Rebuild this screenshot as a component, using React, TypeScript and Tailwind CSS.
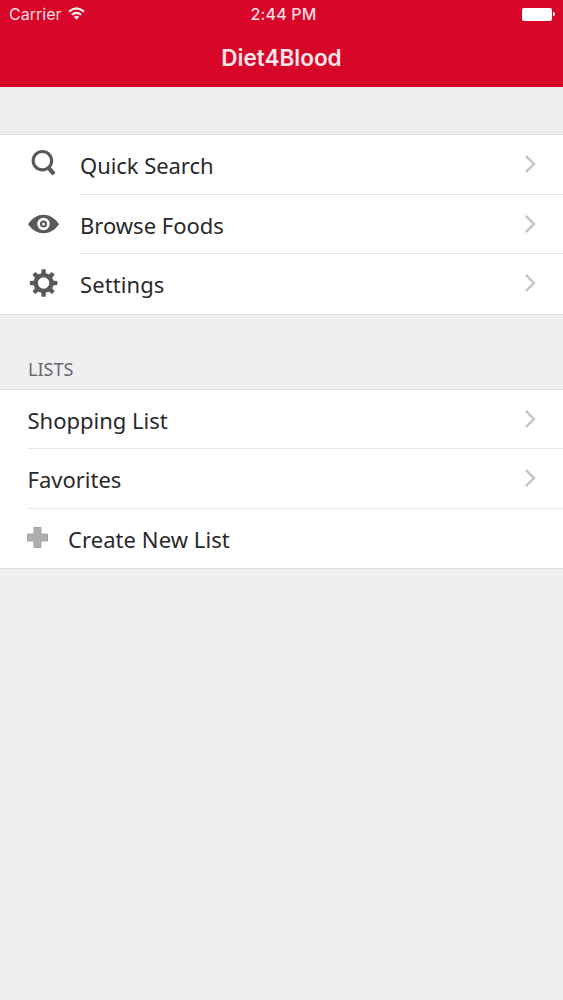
import React from 'react';

interface ListRowProps {
  label: string;
  icon?: React.ReactNode;
  labelClass?: string;
  divider?: boolean;
  chevron?: boolean;
}

const SearchIcon = () => (
  <svg className="w-8 h-8 block" viewBox="0 0 32 32" fill="none" stroke="#59595b">
    <circle cx="14.4" cy="13.7" r="9.2" strokeWidth="3.1" />
    <path d="M19.8 19.8L26 27.2" strokeWidth="4.2" />
  </svg>
);

const EyeIcon = () => (
  <svg className="w-8 h-8 block" viewBox="0 0 32 32">
    <path
      fill="#59595b"
      d="M0 16.2C4.2 10 9.7 6.8 15.5 6.8S26.8 10 31 16.2C26.8 22.2 21.3 25.2 15.5 25.2S4.2 22.2 0 16.2Z"
    />
    <circle cx="15.5" cy="16" r="6.2" fill="#fff" />
    <circle cx="15.5" cy="16" r="3.6" fill="#59595b" />
    <circle cx="15.5" cy="16" r="1.5" fill="#fff" />
  </svg>
);

const TOOTH_ANGLES = [0, 45, 90, 135, 180, 225, 270, 315];

const GearIcon = () => (
  <svg className="w-8 h-8 block" viewBox="0 0 32 32">
    <circle cx="15.6" cy="16" r="7.9" fill="none" stroke="#59595b" strokeWidth="4.4" />
    {TOOTH_ANGLES.map((angle) => (
      <path
        key={angle}
        d="M13.2 7.2L13.6 2.3H17.6L18 7.2Z"
        fill="#59595b"
        transform={`rotate(${angle} 15.6 16)`}
      />
    ))}
  </svg>
);

const PlusIcon = () => (
  <svg className="w-[21px] h-[21px] block" viewBox="0 0 21 21">
    <path d="M7 .5h7v6.5h6.5v7H14v6.5H7V14H.5V7H7Z" fill="#afafaf" stroke="#a3a3a3" />
  </svg>
);

const Chevron = () => (
  <svg className="w-3 h-5 mr-[27px]" viewBox="0 0 12 20" fill="none" stroke="#c8c8ca" strokeWidth="2.6">
    <path d="M1.8 1.8L10 10L1.8 18.2" />
  </svg>
);

const ListRow: React.FC<ListRowProps> = ({
  label,
  icon,
  labelClass = '',
  divider = true,
  chevron = true,
}) => (
  <div className="flex h-[59.5px] pl-7">
    {icon}
    <div
      className={`flex flex-1 items-center justify-between border-b ${
        divider ? 'border-[#e6e6e8]' : 'border-transparent'
      }`}
    >
      <span className={`text-[22px] leading-[30px] pt-[1.5px] whitespace-nowrap text-[#29292b] ${labelClass}`}>
        {label}
      </span>
      {chevron && <Chevron />}
    </div>
  </div>
);

const StatusBar = () => (
  <div className="grid grid-cols-3 items-center h-7 pl-[9px] pr-2 font-['Inter',sans-serif] text-[16px] text-[#ffdce1]">
    <div className="flex items-center gap-[6px]">
      <span className="tracking-[0.02px]">Carrier</span>
      <svg className="w-[17px] h-[13px] -mt-0.5" viewBox="0 0 17 13" fill="none" stroke="#fff0f2" strokeWidth="2.1">
        <path d="M1 4.6Q8.5 -2 16 4.6" />
        <path d="M3.8 7.8Q8.5 3.8 13.2 7.8" />
        <path d="M8.5 12.6L5.8 9.9Q8.5 7.8 11.2 9.9Z" fill="#fff0f2" stroke="none" />
      </svg>
    </div>
    <span className="pl-[3px] text-center font-medium tracking-[0.2px]">2:44 PM</span>
    <div className="flex items-center justify-end gap-px">
      <span className="w-[30px] h-[13px] rounded-[2px] bg-white" />
      <span className="w-0.5 h-1 rounded-r-sm bg-white" />
    </div>
  </div>
);

export default function App() {
  return (
    <div className="min-h-[1000px] bg-[#efeef1] font-['Noto_Sans',sans-serif]">
      <header className="h-[87px] bg-[#d80628]">
        <StatusBar />
        <h1 className="pt-[15px] text-center font-['Inter',sans-serif] text-[22.5px] leading-[30px] font-semibold text-[#ffe6ea]">
          Diet4Blood
        </h1>
      </header>

      <section className="mt-[47px] border-y border-[#dedde1] bg-white">
        <ListRow
          label="Quick Search"
          labelClass="tracking-[-0.05px]"
          icon={<div className="w-[52px] pt-3"><SearchIcon /></div>}
        />
        <ListRow
          label="Browse Foods"
          icon={<div className="w-[52px] pt-[13px]"><EyeIcon /></div>}
        />
        <ListRow
          label="Settings"
          labelClass="tracking-[0.1px]"
          divider={false}
          icon={<div className="w-[52px] pt-[12.5px]"><GearIcon /></div>}
        />
      </section>

      <h2 className="h-[74px] pt-[42.5px] pl-7 text-[18px] leading-[25px] text-[#6a6a6e]">LISTS</h2>

      <section className="border-y border-[#dedde1] bg-white">
        <ListRow label="Shopping List" labelClass="-ml-[0.5px]" />
        <ListRow label="Favorites" labelClass="-ml-[0.5px]" />
        <ListRow
          label="Create New List"
          labelClass="tracking-[0.07px]"
          divider={false}
          chevron={false}
          icon={<div className="w-10 pt-[18px] -ml-px mr-px"><PlusIcon /></div>}
        />
      </section>
    </div>
  );
}
